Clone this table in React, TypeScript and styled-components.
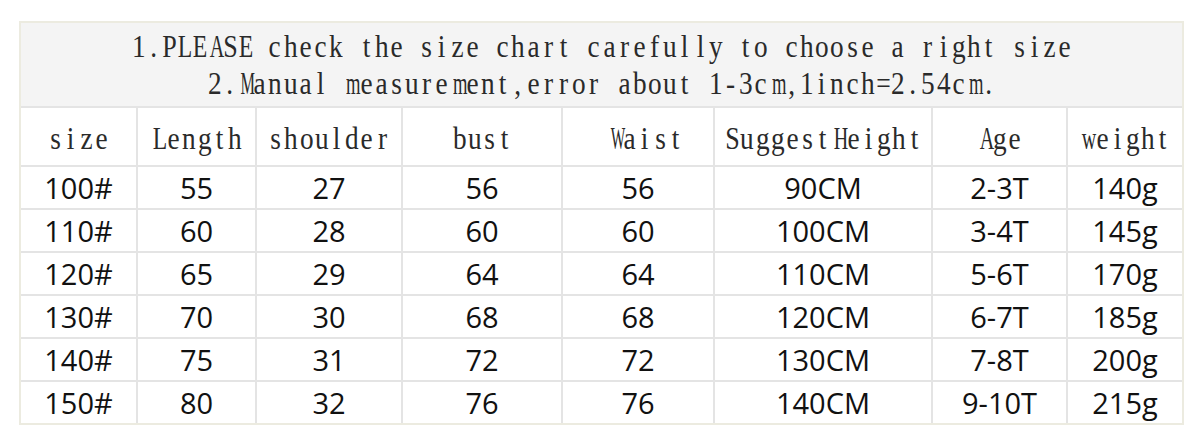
import React from "react";
import styled, { createGlobalStyle } from "styled-components";

const GlobalStyle = createGlobalStyle`
  body {
    margin: 0;
    background: #ffffff;
  }
`;

const Page = styled.div`
  padding: 21px 0 0 19px;
`;

const Chart = styled.div`
  display: grid;
  grid-template-columns: 115px 117px 144px 158px 150px 216px 133px 114px;
  grid-template-rows: 83px 57px repeat(6, 41px);
  gap: 2px;
  width: max-content;
  background: #e4e4e4;
  border: 2px solid #ecebe0;
`;

const Notice = styled.div`
  grid-column: 1 / -1;
  background: #f4f4f4;
  display: flex;
  flex-direction: column;
  align-items: center;
  justify-content: center;
  padding-top: 1px;
  line-height: 37px;
`;

// half-width serif text, one fixed cell per character
const MonoLine = styled.span`
  display: block;
  white-space: pre;
  font-family: "Liberation Serif", "DejaVu Serif", serif;
  font-size: 31px;
  color: #2a2a2a;
`;

const Glyph = styled.span`
  display: inline-block;
  width: 15.2px;
  text-align: center;
`;

const HeadCell = styled.div<{ $shift?: number }>`
  background: #ffffff;
  display: flex;
  align-items: center;
  justify-content: center;
  padding-left: ${(p) => p.$shift ?? 0}px;
  padding-top: 4px;
  white-space: nowrap;
`;

const Cell = styled.div`
  background: #ffffff;
  display: flex;
  align-items: center;
  justify-content: center;
  font-family: "Open Sans", "Noto Sans", sans-serif;
  font-size: 29px;
  color: #111;
  white-space: nowrap;
`;

// Times advance widths (per 1000 em) for the glyphs that need squeezing
const widths: Record<string, number> = {
  a: 444, c: 444, e: 444, f: 333, i: 278, l: 278, m: 778, r: 333, s: 389,
  t: 278, w: 722, z: 444, A: 722, C: 667, E: 611, H: 722, L: 611, M: 889,
  P: 556, S: 556, T: 611, W: 944, ".": 250, ",": 250, "-": 333, "=": 564,
};

function squeeze(c: string) {
  const w = ((widths[c] ?? 500) * 31) / 1000;
  return Math.min(0.88, 14.5 / w);
}

function Mono({ text }: { text: string }) {
  return (
    <MonoLine>
      {text.split("").map((c, i) => (
        <Glyph key={i} style={{ transform: `scaleX(${squeeze(c)})` }}>
          {c === " " ? "\u00a0" : c}
        </Glyph>
      ))}
    </MonoLine>
  );
}

const heads: [string, number][] = [
  ["size", 0],
  ["Length", 0],
  ["shoulder", 0],
  ["bust", 0],
  ["Waist", 14],
  ["SuggestHeight", 0],
  ["Age", 0],
  ["weight", 0],
];

const rows = [
  ["100#", "55", "27", "56", "56", "90CM", "2-3T", "140g"],
  ["110#", "60", "28", "60", "60", "100CM", "3-4T", "145g"],
  ["120#", "65", "29", "64", "64", "110CM", "5-6T", "170g"],
  ["130#", "70", "30", "68", "68", "120CM", "6-7T", "185g"],
  ["140#", "75", "31", "72", "72", "130CM", "7-8T", "200g"],
  ["150#", "80", "32", "76", "76", "140CM", "9-10T", "215g"],
];

function App() {
  return (
    <Page>
      <GlobalStyle />
      <Chart>
        <Notice>
          <Mono text="1.PLEASE check the size chart carefully to choose a right size" />
          <Mono text="2.Manual measurement,error about 1-3cm,1inch=2.54cm." />
        </Notice>
        {heads.map(([h, s]) => (
          <HeadCell key={h} $shift={s}>
            <Mono text={h} />
          </HeadCell>
        ))}
        {rows.map((r) => r.map((v, i) => <Cell key={r[0] + i}>{v}</Cell>))}
      </Chart>
    </Page>
  );
}

export default App;
